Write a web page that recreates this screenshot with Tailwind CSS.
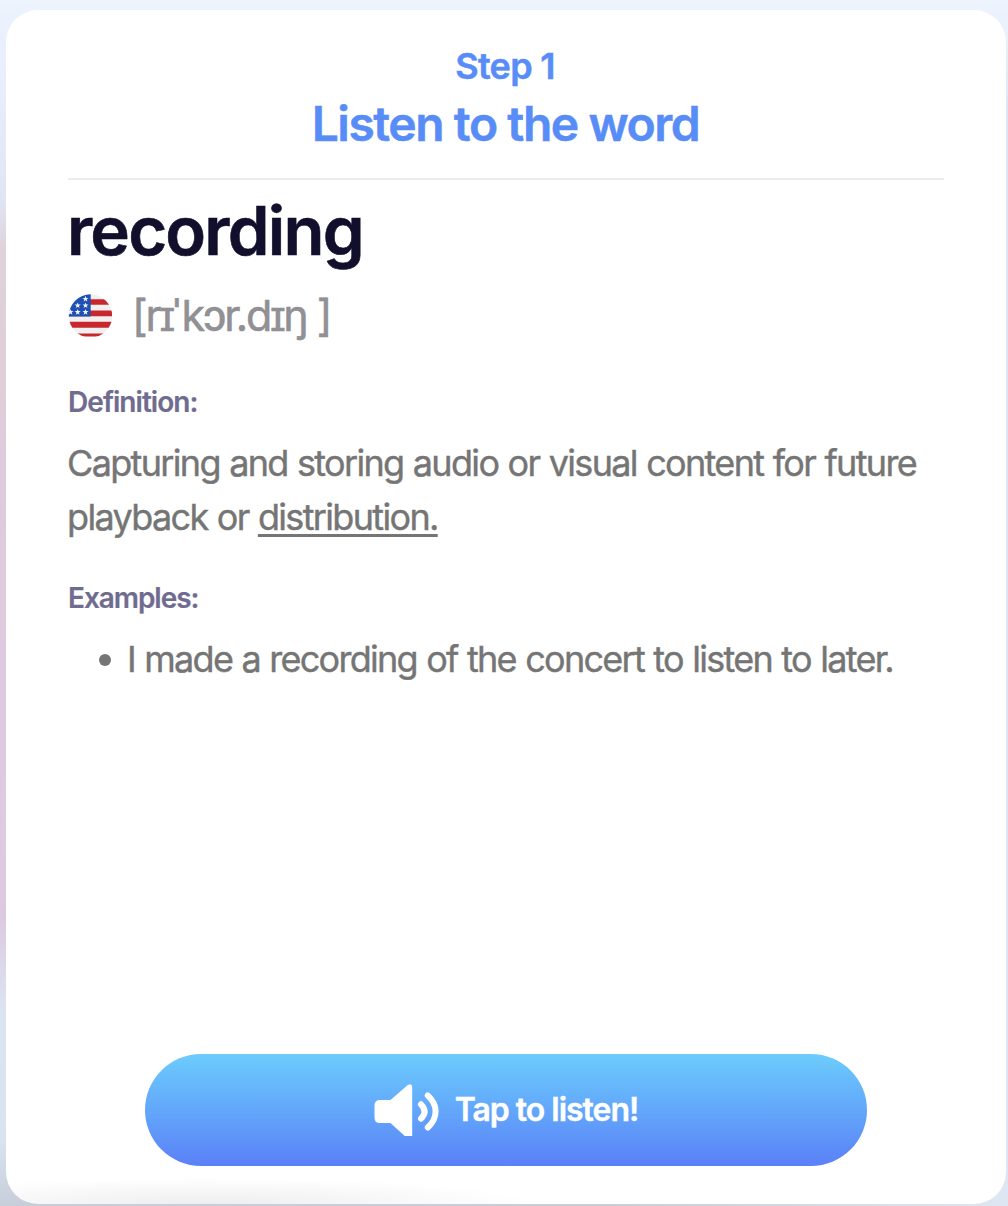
<!DOCTYPE html>
<html lang="en">
<head>
<meta charset="utf-8">
<title>Listen to the word</title>
<script src="https://cdn.jsdelivr.net/npm/@tailwindcss/browser@4"></script>
</head>
<body class="h-[1206px] overflow-hidden bg-[linear-gradient(180deg,#eef4fe_0px,#dfe5f2_200px,#dfd2da_250px,#dfcfd7_380px,#decbdd_460px,#dfcade_590px,#dccbe0_920px,#dce4f0_1010px,#dae2ee_1140px,#c6ceda_1206px)] font-['Inter',sans-serif]">
<div class="h-full bg-[linear-gradient(90deg,transparent_60%,#dde6f2_99%)]">
<div class="h-full bg-[linear-gradient(180deg,#edf4fe_0px,#e9f0fc_40px,transparent_110px)] pt-[10px] pl-[6px]">
<main class="flex h-[1194px] w-[1000px] flex-col rounded-[32px] bg-white bg-[radial-gradient(ellipse_330px_26px_at_200px_100%,#eeeeee,transparent)] px-[62px] pb-[38px]">
  <header class="flex h-[170px] flex-col items-center border-b-2 border-[#ededf1] pt-[34px] font-semibold text-[#588cf7] [-webkit-text-stroke:0.5px]">
    <p class="mr-[2px] text-[36px] leading-[44px] tracking-[-0.7px]">Step 1</p>
    <h1 class="mr-[1px] mt-[6px] text-[48px] leading-[60px] tracking-[-1.45px]">Listen to the word</h1>
  </header>
  <h2 class="mt-[10px] ml-[-1px] text-[67px] leading-[81px] font-semibold tracking-[-1.8px] text-[#120f2d] [-webkit-text-stroke:0.6px]">recording</h2>
  <div class="mt-[13px] flex h-[64px] items-center">
    <svg class="h-[44px] w-[44px]" viewBox="0 0 44 44">
      <defs>
        <clipPath id="c"><path d="M0 0h44v42.500H0z" clip-path="url(#r)"/></clipPath>
        <clipPath id="r"><circle cx="22.500" cy="22" r="21.700"/></clipPath>
        <path id="s" fill="#f4f4f8" d="M0-3L.8-.9 3-.9 1.200.5 1.900 2.700 0 1.400-1.900 2.700-1.200.5-3-.9-.8-.9z"/>
      </defs>
      <g clip-path="url(#c)">
        <path fill="#f0f0f0" d="M0 0h44v43H0z"/>
        <path fill="#c8282d" d="M0 5.200h44v5.600H0zM0 16.500h44v5.700H0zM0 27.800h44v6H0zM0 39.400h44v4H0z"/>
        <path fill="#1e50b4" d="M0 0h22.700v22.500H0z"/>
        <use href="#s" x="17.500" y="4.800"/><use href="#s" x="9.700" y="11.400"/><use href="#s" x="17.500" y="11.400"/>
        <use href="#s" x="2.500" y="18"/><use href="#s" x="9.700" y="18"/><use href="#s" x="17.500" y="18"/>
      </g>
    </svg>
    <p class="mt-[-3px] ml-[20px] text-[43px] leading-[62px] tracking-[-2.1px] whitespace-pre text-[#909095] [-webkit-text-stroke:0.6px]">[rɪ<span class="tracking-[1px]">ˈ</span>kɔr.dɪŋ ]</p>
  </div>
  <h3 class="mt-[34px] text-[28px] leading-[40px] font-semibold tracking-[-0.95px] text-[#6f6c90] [-webkit-text-stroke:0.2px]">Definition:</h3>
  <p class="mt-[14px] ml-[-1px] text-[36px] leading-[54px] tracking-[-1.66px] whitespace-nowrap text-[#757575] [-webkit-text-stroke:0.4px] [word-spacing:0.800px]">Capturing and storing audio or visual content for future<br>playback or <span class="underline decoration-[3px] underline-offset-[4px]">distribution.</span></p>
  <h3 class="mt-[34px] text-[28px] leading-[40px] font-semibold tracking-[-1.05px] text-[#6f6c90] [-webkit-text-stroke:0.2px]">Examples:</h3>
  <ul class="mt-[14px] text-[36px] leading-[54px] tracking-[-1.7px] text-[#757575] [-webkit-text-stroke:0.4px] [word-spacing:0.800px]">
    <li class="flex items-center whitespace-nowrap"><span class="mt-[2px] ml-[31px] mr-[16px] h-[12px] w-[12px] rounded-full bg-[#757575]"></span>I made a recording of the concert to listen to later.</li>
  </ul>
  <button class="mt-auto flex h-[112px] w-[722px] items-center justify-center self-center rounded-full bg-linear-to-b from-[#6cccfc] to-[#5b80f7] text-[32px] font-semibold tracking-[-1.02px] text-white [-webkit-text-stroke:0.4px]">
    <svg class="mr-[15px] h-[54px] w-[66px]" viewBox="0 0 66 54" fill="none">
      <path fill="#fff" d="M6 17h10.500L33.500 2.200q4.500-2.500 4.700 1.800v49h-7.500L16.500 40H6q-5.500 0-5.500-5.500v-12Q.5 17 6 17z"/>
      <path d="M47 21.300q7 7.200 0 14.400M53.800 12.500c10.400 9.500 10.400 22.500 0 32" stroke="#fff" stroke-width="6" stroke-linecap="round"/>
    </svg><span>Tap to listen!</span></button>
</main>
</div>
</div>
</body>
</html>
